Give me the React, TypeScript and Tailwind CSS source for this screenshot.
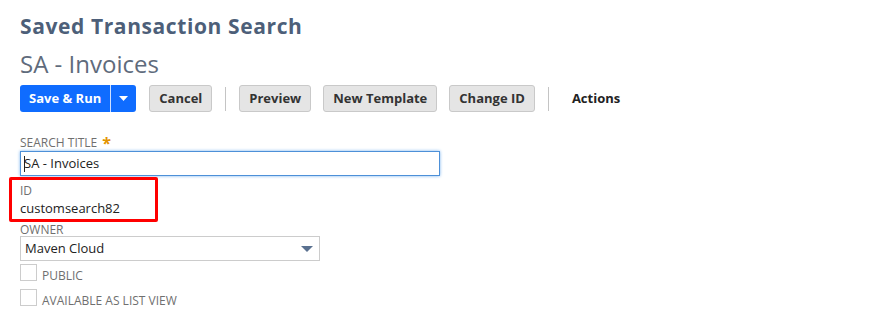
import React from 'react'

const btn =
  'h-[27px] rounded-[3px] border border-[#c9c9c9] bg-[#e5e5e5] px-[9px] text-[13px] font-bold text-[#333]'

function Sep() {
  return <div className="mx-[13px] h-[24px] w-px bg-[#c4c4c4]" />
}

function Check({ label, className }: { label: string; className: string }) {
  return (
    <div className={`flex items-start gap-[5px] ${className}`}>
      <span className="h-[17px] w-[17px] border border-[#ccc] bg-white" />
      <span className="mt-[5px] text-[12px] leading-[14px] text-[#6f6f6f]">{label}</span>
    </div>
  )
}

export default function App() {
  return (
    <div className="h-[313px] w-[877px] overflow-hidden bg-white pl-[20px] pt-[12px] font-['Open_Sans',sans-serif]">
      <h1 className="text-[21px] font-bold leading-[28px] tracking-[0.6px] text-[#4d5f79]">
        Saved Transaction Search
      </h1>
      <div className="mt-[9px] text-[24px] leading-[30px] text-[#5f6b7c]">SA - Invoices</div>

      <div className="mt-[6px] flex items-center">
        <div className="flex h-[27px] rounded-[3px] bg-[#0f6cff] text-white">
          <button className="border-r border-[#cfe0ff] px-[9px] text-[13px] font-bold">Save &amp; Run</button>
          <button className="flex w-[25px] items-center justify-center">
            <svg width="9" height="5" viewBox="0 0 9 5">
              <path d="M0 0h9L4.5 5z" fill="white" />
            </svg>
          </button>
        </div>
        <button className={`${btn} ml-[13px]`}>Cancel</button>
        <Sep />
        <div className="flex gap-[12px]">
          <button className={btn}>Preview</button>
          <button className={btn}>New Template</button>
          <button className={btn}>Change ID</button>
        </div>
        <Sep />
        <span className="ml-[10px] text-[13px] font-bold text-[#222]">Actions</span>
      </div>

      <div className="mt-[24px] flex items-center gap-[5px] text-[12px] leading-[14px] text-[#6f6f6f]">
        SEARCH TITLE <span className="text-[16px] font-bold leading-[12px] text-[#e39400]">*</span>
      </div>
      <div className="mt-[1px] flex h-[25px] w-[420px] items-center border border-[#4d90d8] px-[3px] text-[13px] text-[#222] shadow-[0_0_3px_#7ab4ee]">
        <span className="mr-[-1px] h-[16px] w-px bg-[#222]" />
        SA - Invoices
      </div>

      <div className="ml-[-11px] mt-[1px] h-[45px] w-[149px] rounded-[2px] border-[3px] border-[#ff0000] px-[8px] pt-[2px]">
        <div className="text-[12px] leading-[17px] text-[#6f6f6f]">ID</div>
        <div className="text-[13px] leading-[18px] text-[#222]">customsearch82</div>
      </div>

      <div className="mt-[2px] text-[12px] leading-[12px] text-[#6f6f6f]">OWNER</div>
      <div className="flex h-[25px] w-[300px] items-center justify-between border border-[#ccc] pl-[4px] pr-[6px] text-[13px] text-[#222]">
        Maven Cloud
        <svg width="12" height="6" viewBox="0 0 12 6">
          <path d="M0 0h12L6 6z" fill="#5a7190" />
        </svg>
      </div>

      <Check label="PUBLIC" className="mt-[3px]" />
      <Check label="AVAILABLE AS LIST VIEW" className="mt-[6px]" />
    </div>
  )
}
